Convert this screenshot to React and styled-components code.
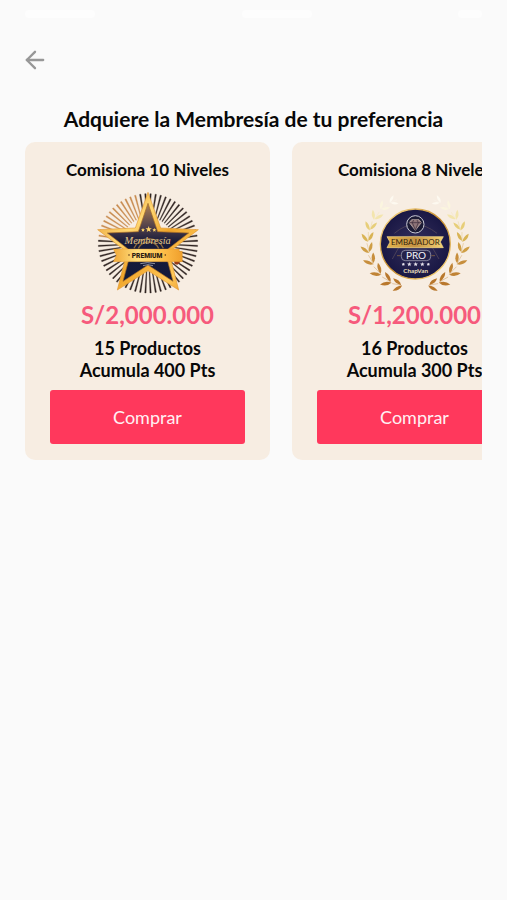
import React from 'react'
import styled, { createGlobalStyle } from 'styled-components'
import { ArrowLeft } from 'lucide-react'

const GlobalStyle = createGlobalStyle`
  * {
    box-sizing: border-box;
  }

  body {
    margin: 0;
    background: #fafafa;
    color: #080808;
    font-family: Lato, 'Noto Sans', sans-serif;
  }
`

const Screen = styled.div`
  padding: 0 25px;
`

const StatusBar = styled.div`
  display: flex;
  justify-content: space-between;
  height: 46px;
  padding-top: 10px;
`

const StatusItem = styled.span`
  width: ${props => props.$width}px;
  height: 8px;
  border-radius: 4px;
  background: #fdfdfd;
`

const BackButton = styled.button`
  display: flex;
  margin-left: -4px;
  padding: 0;
  border: 0;
  background: none;
  color: #979797;
  cursor: pointer;
`

const Title = styled.h1`
  margin: 32px 0 10px;
  font-size: 21px;
  font-weight: 700;
  line-height: 26px;
  text-align: center;
`

const Carousel = styled.div`
  display: flex;
  gap: 22px;
  overflow-x: auto;
  scrollbar-width: none;
`

const Card = styled.article`
  display: flex;
  flex: 0 0 245px;
  flex-direction: column;
  align-items: center;
  padding: 18px 25px 16px;
  border-radius: 10px;
  background: #f7ede2;
`

const CardTitle = styled.h2`
  margin: 0 0 4px;
  font-size: 17px;
  font-weight: 700;
  line-height: 20px;
  white-space: nowrap;
`

const Badge = styled.svg`
  width: 120px;
  height: 116px;
`

const Price = styled.p`
  margin: 0 0 7px;
  color: #f65a7c;
  font-size: 24px;
  font-weight: 700;
  line-height: 30px;
`

const Detail = styled.p`
  margin: 0;
  font-size: 18px;
  font-weight: 700;
  line-height: 22px;
`

const BuyButton = styled.button`
  width: 100%;
  height: 54px;
  margin-top: 9px;
  border: 0;
  border-radius: 3px;
  background: #ff385c;
  color: #fff0f3;
  font-family: inherit;
  font-size: 18px;
  cursor: pointer;
`

// five pointed star centred on x, y
const starPoints = (x, y, outer, inner) =>
  Array.from({ length: 10 }, (_, i) => {
    const r = i % 2 ? inner : outer
    const a = (i * 36 - 90) * Math.PI / 180
    return `${(x + r * Math.cos(a)).toFixed(1)},${(y + r * Math.sin(a)).toFixed(1)}`
  }).join(' ')

const rays = Array.from({ length: 60 }, (_, i) => i * 6 + 3)

const PremiumBadge = () => (
  <Badge viewBox='0 0 360 348' role='img' aria-label='Membresía Premium'>
    <defs>
      <linearGradient id='starGold' x1='0' y1='0' x2='1' y2='1'>
        <stop offset='0' stopColor='#e08a1c' />
        <stop offset='0.35' stopColor='#ffd873' />
        <stop offset='0.55' stopColor='#f0a52a' />
        <stop offset='0.8' stopColor='#ffc95a' />
        <stop offset='1' stopColor='#e48717' />
      </linearGradient>
      <linearGradient id='starNavy' x1='0' y1='0' x2='0' y2='1'>
        <stop offset='0' stopColor='#b08355' />
        <stop offset='0.3' stopColor='#51404a' />
        <stop offset='0.5' stopColor='#171b3a' />
        <stop offset='1' stopColor='#121a3b' />
      </linearGradient>
      <linearGradient id='ribbonGold' x1='0' y1='0' x2='1' y2='0'>
        <stop offset='0' stopColor='#f0a838' />
        <stop offset='0.35' stopColor='#ffdf7e' />
        <stop offset='0.7' stopColor='#ffc04b' />
        <stop offset='1' stopColor='#ef9f2c' />
      </linearGradient>
    </defs>
    {rays.map(angle => (
      <path
        key={angle}
        d='M178 29 L182 29 L181 100 L179 100 Z'
        fill={angle > 276 && angle < 350 ? '#c78a4e' : '#302522'}
        stroke={angle > 276 && angle < 350 ? '#c78a4e' : '#302522'}
        strokeWidth='1'
        transform={`rotate(${angle} 180 178)`}
      />
    ))}
    <path d='M180 25 L218 132 L331 137 L243 204 L272 318 L180 260 L88 318 L117 204 L29 137 L142 132 Z' fill='url(#starGold)' stroke='#e39a35' strokeWidth='2' />
    <path d='M180 58 L209 143 L302 147 L231 202 L255 292 L180 243 L105 292 L129 202 L58 147 L151 143 Z' fill='url(#starNavy)' stroke='#a76b22' strokeWidth='2' />
    <path d='M138 193 A48 48 0 0 1 226 193 M151 193 A34 34 0 0 1 212 193' fill='none' stroke='#8d6a3c' strokeWidth='4' />
    <polygon points={starPoints(165, 138, 6, 3)} fill='#ffd468' />
    <polygon points={starPoints(182, 136, 10, 4)} fill='#ffd468' />
    <polygon points={starPoints(199, 138, 6, 3)} fill='#ffd468' />
    <text x='179' y='179' textAnchor='middle' fontFamily='Liberation Serif, serif' fontStyle='italic' fontSize='31' fill='#e3c98d'>Membresía</text>
    <path d='M258 231 H280 L268 242 L260 240 Z' fill='#9b3b16' />
    <path d='M76 195 H274 V202 H283 V233 H76 L85 214 Z' fill='url(#ribbonGold)' stroke='#e09627' strokeWidth='1' />
    <text x='177' y='221' textAnchor='middle' fontFamily='Roboto, sans-serif' fontWeight='900' fontSize='20' fill='#2b1b12'>PREMIUM</text>
    <path d='M121 211 h4 v4 h-4 Z M230 211 h4 v4 h-4 Z' fill='#6d451b' />
    <path d='M157 239 Q178 233 201 239 M165 245 Q180 239 195 245' fill='none' stroke='#c9ccd0' strokeWidth='2' />
  </Badge>
)

// stem position and colour of every pair of leaves, from the foot to the tip
const leaves = [
  { x: 141, y: 305, turn: -80, size: 28, color: '#b8772c' },
  { x: 109, y: 296, turn: -60, size: 30, color: '#b9782d' },
  { x: 78, y: 272, turn: -44, size: 30, color: '#c08335' },
  { x: 55, y: 241, turn: -30, size: 29, color: '#c78e3c' },
  { x: 42, y: 207, turn: -14, size: 28, color: '#cf9e45' },
  { x: 39, y: 173, turn: 0, size: 27, color: '#d9b455' },
  { x: 44, y: 139, turn: 14, size: 26, color: '#e7ce79' },
  { x: 57, y: 107, turn: 32, size: 26, color: '#f3e5ad' },
  { x: 77, y: 76, turn: 50, size: 24, color: '#fbf5df' },
  { x: 104, y: 56, turn: 66, size: 22, color: '#fdf9f0' }
]

const Branch = ({ flip }) => (
  <g transform={flip ? 'translate(361 0) scale(-1 1)' : undefined}>
    {leaves.map(({ x, y, turn, size, color }) => (
      <g key={y} fill={color} transform={`translate(${x} ${y}) rotate(${turn}) scale(${size / 28})`}>
        <path d='M0 0 Q-18 -5 -20 -25 Q-3 -18 0 0 Z' />
        <path d='M1 -3 Q17 -9 17 -30 Q2 -22 1 -3 Z' />
        <path d='M0 0 Q2 -14 1 -30' fill='none' stroke={color} strokeWidth='1' />
      </g>
    ))}
  </g>
)

const AmbassadorBadge = () => (
  <Badge viewBox='0 0 360 348' role='img' aria-label='Embajador Pro'>
    <defs>
      <linearGradient id='ringGold' x1='0' y1='0' x2='1' y2='1'>
        <stop offset='0' stopColor='#ffe396' />
        <stop offset='0.5' stopColor='#c58a2a' />
        <stop offset='1' stopColor='#ffe08c' />
      </linearGradient>
      <linearGradient id='bannerGold' x1='0' y1='0' x2='1' y2='0'>
        <stop offset='0' stopColor='#e3b34c' />
        <stop offset='0.5' stopColor='#c69343' />
        <stop offset='1' stopColor='#f3d273' />
      </linearGradient>
      <radialGradient id='discNavy'>
        <stop offset='0' stopColor='#35305c' />
        <stop offset='1' stopColor='#191744' />
      </radialGradient>
    </defs>
    <Branch />
    <Branch flip />
    <circle cx='181' cy='180' r='105' fill='url(#discNavy)' stroke='url(#ringGold)' strokeWidth='4' />
    <path d='M112 225 Q180 85 252 225 M118 148 Q180 95 246 148' fill='none' stroke='#4a4058' strokeWidth='3' />
    <circle cx='181' cy='121' r='26' fill='#1b1a35' stroke='#c9cad6' strokeWidth='3' />
    <path d='M163 116 L170 107 H192 L199 116 L181 139 Z' fill='#8e7478' stroke='#d3bfb9' strokeWidth='2' />
    <path d='M163 116 H199 M172 116 L181 138 L190 116 L186 108 M172 116 L176 108' fill='none' stroke='#3a2b3a' strokeWidth='2' />
    <path d='M96 158 H265 L256 174 L265 191 H96 L105 174 Z' fill='url(#bannerGold)' stroke='#f8dd8b' strokeWidth='2' />
    <text x='181' y='182' textAnchor='middle' fontFamily='Lato, sans-serif' fontSize='24' fill='#35260f'>EMBAJADOR</text>
    <rect x='139' y='199' width='88' height='31' rx='12' fill='#24224a' stroke='#b8b8c9' strokeWidth='2' />
    <text x='183' y='225' textAnchor='middle' fontFamily='Lato, sans-serif' fontSize='30' fill='#f4f4f8'>PRO</text>
    <path d='M126 215 H137 M229 215 H240' stroke='#9b7440' strokeWidth='2' />
    {[145, 163, 182, 202, 220].map((x, i) => (
      <polygon key={x} points={starPoints(x, 241, i % 4 ? 7 : 5, 3)} fill='#e9e5ee' />
    ))}
    <text x='182' y='266' textAnchor='middle' fontFamily='Lato, sans-serif' fontWeight='700' fontSize='19' fill='#e8dfbd'>ChapVan</text>
  </Badge>
)

const memberships = [
  { levels: 10, badge: PremiumBadge, price: 'S/2,000.000', products: 15, points: 400 },
  { levels: 8, badge: AmbassadorBadge, price: 'S/1,200.000', products: 16, points: 300 }
]

const App = () => {
  return (
    <>
      <GlobalStyle />
      <Screen>
        <StatusBar>
          <StatusItem $width={70} />
          <StatusItem $width={70} />
          <StatusItem $width={24} />
        </StatusBar>
        <BackButton type='button' aria-label='Volver'>
          <ArrowLeft size={28} />
        </BackButton>
        <Title>Adquiere la Membresía de tu preferencia</Title>
        <Carousel>
          {memberships.map(({ levels, badge: Picture, price, products, points }) => (
            <Card key={levels}>
              <CardTitle>Comisiona {levels} Niveles</CardTitle>
              <Picture />
              <Price>{price}</Price>
              <Detail>{products} Productos</Detail>
              <Detail>Acumula {points} Pts</Detail>
              <BuyButton type='button'>Comprar</BuyButton>
            </Card>
          ))}
        </Carousel>
      </Screen>
    </>
  )
}

export default App
